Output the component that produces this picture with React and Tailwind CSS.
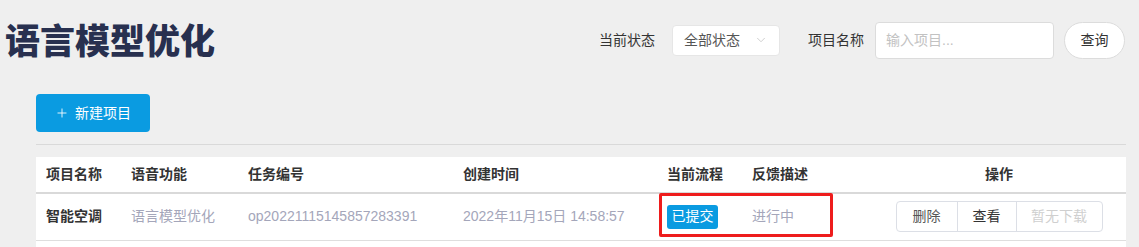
import { ChevronDown, Plus } from "lucide-react";

const font = { fontFamily: '"Liberation Sans", "Noto Sans CJK SC", sans-serif' };

const cols = [
	{ title: "项目名称", w: "w-[85px]" },
	{ title: "语音功能", w: "w-[117px]" },
	{ title: "任务编号", w: "w-[215px]" },
	{ title: "创建时间", w: "w-[204px]" },
	{ title: "当前流程", w: "w-[85px]" },
	{ title: "反馈描述", w: "w-[130px]" },
	{ title: "操作", w: "w-[254px]", center: true },
];

const App = () => {
	return (
		<div className="h-[247px] w-full overflow-hidden bg-[#efefef] text-[14px]" style={font}>
			{/* header */}
			<div className="flex h-[80px] items-center justify-between pl-[5px] pr-[14px]">
				<h1 className="pt-[2px] text-[35px] font-black leading-none text-[#28304f]">语言模型优化</h1>
				<div className="flex items-center">
					<span className="text-[#333]">当前状态</span>
					<div className="ml-[17px] flex h-[31px] w-[108px] items-center justify-between rounded-[4px] border border-[#e6e6e6] bg-white pl-[11px] pr-[11px] text-[#555]">
						<span>全部状态</span>
						<ChevronDown className="h-[14px] w-[14px] text-[#c8c8c8]" strokeWidth={1.5} />
					</div>
					<span className="ml-[28px] text-[#333]">项目名称</span>
					<div className="ml-[11px] flex h-[37px] w-[179px] items-center rounded-[4px] border border-[#dcdcdc] bg-white pl-[10px] text-[#c2c2c2]">
						输入项目...
					</div>
					<button className="ml-[10px] flex h-[37px] w-[61px] items-center justify-center rounded-full border border-[#dcdcdc] bg-white text-[#333]">
						查询
					</button>
				</div>
			</div>

			<div className="pl-[36px] pr-[13px] pt-[14px]">
				<button className="flex h-[38px] w-[114px] items-center justify-center gap-[6px] rounded-[4px] bg-[#0a9be1] text-white">
					<Plus className="h-[14px] w-[14px]" strokeWidth={1.5} />
					<span>新建项目</span>
				</button>
				<div className="mt-[12px] border-b border-[#d9d9d9]" />

				<div className="relative mt-[12px] bg-white">
					<table className="w-[1090px] table-fixed border-collapse">
						<thead>
							<tr className="h-[36px] border-b-2 border-[#d9d9d9]">
								{cols.map((c) => (
									<th
										key={c.title}
										className={`${c.w} ${c.center ? "text-center" : "pl-[10px] text-left"} font-bold text-[#333]`}
									>
										{c.title}
									</th>
								))}
							</tr>
						</thead>
						<tbody>
							<tr className="h-[47px] border-b border-[#dedede]">
								<td className="pl-[10px] font-bold text-[#333]">智能空调</td>
								<td className="pl-[10px] text-[#a4a6ba]">语言模型优化</td>
								<td className="pl-[10px] text-[#a4a6ba]">op20221115145857283391</td>
								<td className="pl-[10px] text-[#a4a6ba]">2022年11月15日 14:58:57</td>
								<td className="pl-[10px]">
									<span className="inline-flex h-[24px] w-[51px] items-center justify-center rounded-[3px] bg-[#0a9be1] text-white">
										已提交
									</span>
								</td>
								<td className="pl-[10px] text-[#a4a6ba]">进行中</td>
								<td className="text-center">
									<div className="inline-flex h-[31px] overflow-hidden rounded-[4px] border border-[#dcdfe6]">
										<span className="flex w-[60px] items-center justify-center text-[#555]">删除</span>
										<span className="flex w-[59px] items-center justify-center border-l border-[#dcdfe6] text-[#333]">查看</span>
										<span className="flex w-[86px] items-center justify-center border-l border-[#dcdfe6] text-[#cfcfcf]">暂无下载</span>
									</div>
								</td>
							</tr>
						</tbody>
					</table>
					<div className="h-[10px]" />
					{/* highlight annotation */}
					<div className="absolute left-[623px] top-[36px] h-[44px] w-[174px] rounded-[2px] border-[3px] border-[#ee1c1c]" />
				</div>
			</div>
		</div>
	);
};

export default App;
